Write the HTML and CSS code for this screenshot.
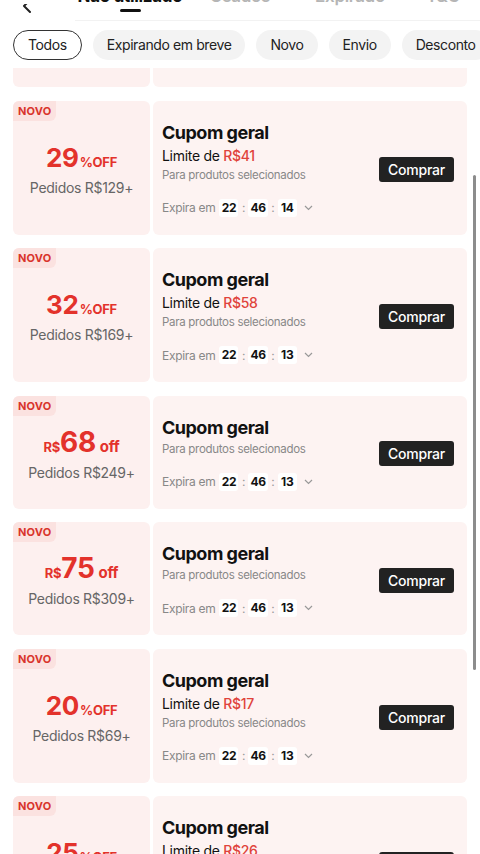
FILE: index.html
```html
<!DOCTYPE html>
<html lang="pt">
  <head>
    <meta charset="utf-8">
    <title>Meus cupons</title>
    <link rel="stylesheet" href="styles.css">
  </head>
  <body>
    <div class="page">
      <div class="header">
        <div class="tabs">
          <div class="back">
            <svg width="12" height="12" viewBox="0 0 12 12"><polyline points="9,-4 3,2 9,8" fill="none" stroke="#222" stroke-width="2" stroke-linecap="round" stroke-linejoin="round"/></svg>
          </div>
          <div class="tab-list">
            <div class="tab active"><span class="tab-label">Não utilizado</span><span class="tab-bar"></span></div>
            <div class="tab"><span class="tab-label">Usados</span></div>
            <div class="tab"><span class="tab-label">Expirado</span></div>
            <div class="tab tab-small"><span class="tab-label">T&amp;C</span></div>
          </div>
        </div>
        <div class="chips">
          <span class="chip chip-active">Todos</span>
          <span class="chip">Expirando em breve</span>
          <span class="chip">Novo</span>
          <span class="chip">Envio</span>
          <span class="chip">Desconto</span>
        </div>
      </div>

      <div class="list">
        <!-- previous coupon, mostly scrolled out -->
        <div class="coupon coupon-prev">
          <div class="coupon-left"></div>
          <div class="coupon-right"></div>
        </div>

        <div class="coupon">
          <div class="coupon-left">
            <span class="badge">NOVO</span>
            <div class="amount"><span class="num">29</span><span class="unit">%OFF</span></div>
            <div class="min">Pedidos R$129+</div>
          </div>
          <div class="coupon-right">
            <div class="info">
              <div class="title">Cupom geral</div>
              <div class="limit">Limite de <span class="red">R$41</span></div>
              <div class="scope">Para produtos selecionados</div>
              <div class="expiry">
                <span class="expiry-label">Expira em</span>
                <span class="time">22</span><span class="colon">:</span><span class="time">46</span><span class="colon">:</span><span class="time">14</span>
                <svg class="chev" width="9" height="6" viewBox="0 0 9 6"><polyline points="1,1 4.5,4.5 8,1" fill="none" stroke="#999" stroke-width="1.2"/></svg>
              </div>
            </div>
            <button class="buy">Comprar</button>
          </div>
        </div>

        <div class="coupon">
          <div class="coupon-left">
            <span class="badge">NOVO</span>
            <div class="amount"><span class="num">32</span><span class="unit">%OFF</span></div>
            <div class="min">Pedidos R$169+</div>
          </div>
          <div class="coupon-right">
            <div class="info">
              <div class="title">Cupom geral</div>
              <div class="limit">Limite de <span class="red">R$58</span></div>
              <div class="scope">Para produtos selecionados</div>
              <div class="expiry">
                <span class="expiry-label">Expira em</span>
                <span class="time">22</span><span class="colon">:</span><span class="time">46</span><span class="colon">:</span><span class="time">13</span>
                <svg class="chev" width="9" height="6" viewBox="0 0 9 6"><polyline points="1,1 4.5,4.5 8,1" fill="none" stroke="#999" stroke-width="1.2"/></svg>
              </div>
            </div>
            <button class="buy">Comprar</button>
          </div>
        </div>

        <div class="coupon">
          <div class="coupon-left">
            <span class="badge">NOVO</span>
            <div class="amount"><span class="cur">R$</span><span class="num">68</span><span class="unit unit-off">off</span></div>
            <div class="min">Pedidos R$249+</div>
          </div>
          <div class="coupon-right">
            <div class="info">
              <div class="title">Cupom geral</div>
              <div class="scope">Para produtos selecionados</div>
              <div class="expiry">
                <span class="expiry-label">Expira em</span>
                <span class="time">22</span><span class="colon">:</span><span class="time">46</span><span class="colon">:</span><span class="time">13</span>
                <svg class="chev" width="9" height="6" viewBox="0 0 9 6"><polyline points="1,1 4.5,4.5 8,1" fill="none" stroke="#999" stroke-width="1.2"/></svg>
              </div>
            </div>
            <button class="buy">Comprar</button>
          </div>
        </div>

        <div class="coupon">
          <div class="coupon-left">
            <span class="badge">NOVO</span>
            <div class="amount"><span class="cur">R$</span><span class="num">75</span><span class="unit unit-off">off</span></div>
            <div class="min">Pedidos R$309+</div>
          </div>
          <div class="coupon-right">
            <div class="info">
              <div class="title">Cupom geral</div>
              <div class="scope">Para produtos selecionados</div>
              <div class="expiry">
                <span class="expiry-label">Expira em</span>
                <span class="time">22</span><span class="colon">:</span><span class="time">46</span><span class="colon">:</span><span class="time">13</span>
                <svg class="chev" width="9" height="6" viewBox="0 0 9 6"><polyline points="1,1 4.5,4.5 8,1" fill="none" stroke="#999" stroke-width="1.2"/></svg>
              </div>
            </div>
            <button class="buy">Comprar</button>
          </div>
        </div>

        <div class="coupon">
          <div class="coupon-left">
            <span class="badge">NOVO</span>
            <div class="amount"><span class="num">20</span><span class="unit">%OFF</span></div>
            <div class="min">Pedidos R$69+</div>
          </div>
          <div class="coupon-right">
            <div class="info">
              <div class="title">Cupom geral</div>
              <div class="limit">Limite de <span class="red">R$17</span></div>
              <div class="scope">Para produtos selecionados</div>
              <div class="expiry">
                <span class="expiry-label">Expira em</span>
                <span class="time">22</span><span class="colon">:</span><span class="time">46</span><span class="colon">:</span><span class="time">13</span>
                <svg class="chev" width="9" height="6" viewBox="0 0 9 6"><polyline points="1,1 4.5,4.5 8,1" fill="none" stroke="#999" stroke-width="1.2"/></svg>
              </div>
            </div>
            <button class="buy">Comprar</button>
          </div>
        </div>

        <div class="coupon">
          <div class="coupon-left">
            <span class="badge">NOVO</span>
            <div class="amount"><span class="num">25</span><span class="unit">%OFF</span></div>
            <div class="min">Pedidos R$99+</div>
          </div>
          <div class="coupon-right">
            <div class="info">
              <div class="title">Cupom geral</div>
              <div class="limit">Limite de <span class="red">R$26</span></div>
              <div class="scope">Para produtos selecionados</div>
              <div class="expiry">
                <span class="expiry-label">Expira em</span>
                <span class="time">22</span><span class="colon">:</span><span class="time">46</span><span class="colon">:</span><span class="time">13</span>
              </div>
            </div>
            <button class="buy">Comprar</button>
          </div>
        </div>

        <div class="scrollbar"></div>
      </div>
    </div>
  </body>
</html>
```

FILE: styles.css
```css
*,
*:before,
*:after {
  box-sizing: border-box;
}

body {
  margin: 0;
  padding: 0;
  font-family: Inter, "Liberation Sans", sans-serif;
  letter-spacing: -0.3px;
  color: #111;
  background-color: #fff;
}

.page {
  width: 480px;
  height: 854px;
  overflow: hidden;
  display: flex;
  flex-direction: column;
}

/* header: tabs (scrolled partly off) + filter chips */
.header {
  height: 68px;
  flex: none;
  background-color: #fff;
}

.tabs {
  display: flex;
  height: 21px;
  overflow: hidden;
}

.back {
  width: 75px;
  padding-left: 21px;
  flex: none;
}

.tab-list {
  flex: 1;
  display: flex;
  border-bottom: 1px solid #f2f2f2;
}

.tab {
  width: 110px;
  display: flex;
  flex-direction: column;
  align-items: center;
}

.tab-small {
  width: 76px;
}

.tab-label {
  font-size: 17px;
  font-weight: 600;
  line-height: 22px;
  margin-top: -15px;
  color: #b5b5b5;
  white-space: nowrap;
}

.tab.active .tab-label {
  color: #111;
  font-weight: 700;
}

.tab-bar {
  width: 21px;
  height: 3px;
  margin-top: 2px;
  border-radius: 2px;
  background-color: #111;
}

.chips {
  display: flex;
  gap: 11px;
  padding: 9px 0 0 13px;
  white-space: nowrap;
  overflow: hidden;
}

.chip {
  flex: none;
  height: 30px;
  line-height: 30px;
  padding: 0 14px;
  border-radius: 15px;
  font-size: 14px;
  letter-spacing: -0.4px;
  color: #222;
  background-color: #f3f3f3;
}

.chip-active {
  background-color: #fff;
  border: 1.5px solid #333;
  line-height: 27px;
}

/* coupon list */
.list {
  position: relative;
  flex: 1;
  overflow: hidden;
  display: flex;
  flex-direction: column;
  gap: 13.5px;
  padding: 0 13px;
}

.coupon {
  display: flex;
  gap: 3px;
  flex: none;
}

.coupon-prev {
  height: 134px;
  margin-top: -115px;
}

.coupon-left {
  position: relative;
  width: 137px;
  flex: none;
  display: flex;
  flex-direction: column;
  align-items: center;
  justify-content: center;
  padding-top: 4px;
  border-radius: 6px;
  background-color: #fdf0ef;
}

.badge {
  position: absolute;
  top: 0;
  left: 0;
  padding: 3px 5px;
  font-size: 11px;
  font-weight: 700;
  line-height: 14px;
  letter-spacing: 0.2px;
  color: #d9342b;
  background-color: #fbe2e0;
  border-radius: 6px 0 6px 0;
}

.amount {
  display: flex;
  align-items: baseline;
  line-height: 30px;
  color: #e3322b;
  font-weight: 700;
}

.num {
  font-size: 26px;
}

.cur {
  font-size: 13px;
}

.coupon .cur + .num {
  font-size: 28px;
}

.unit {
  font-size: 13px;
  margin-left: 1px;
}

.unit-off {
  font-size: 15px;
  margin-left: 4px;
}

.min {
  margin-top: 2px;
  font-size: 14px;
  line-height: 18px;
  color: #666;
}

.coupon-right {
  flex: 1;
  display: flex;
  align-items: center;
  padding: 21px 13px 18px 9px;
  border-radius: 6px;
  background-color: #fdf3f2;
}

.info {
  flex: 1;
}

.title {
  font-size: 18px;
  font-weight: 700;
  line-height: 22px;
  letter-spacing: -0.5px;
}

.limit {
  margin-top: 3px;
  font-size: 14px;
  line-height: 18px;
  color: #111;
}

.red {
  color: #e0433b;
  font-weight: 500;
}

.scope {
  margin-top: 2px;
  font-size: 11.5px;
  line-height: 16px;
  color: #888;
}

.expiry {
  margin-top: 16px;
  display: flex;
  align-items: center;
  height: 18px;
  font-size: 12px;
  color: #888;
}

.expiry-label {
  margin-right: 4px;
}

.time {
  min-width: 19px;
  height: 18px;
  line-height: 18px;
  padding: 0 2px;
  text-align: center;
  font-weight: 700;
  color: #111;
  background-color: #fff;
  border-radius: 3px;
}

.colon {
  width: 10px;
  text-align: center;
  color: #999;
}

.chev {
  margin-left: 7px;
}

.buy {
  flex: none;
  margin-top: 0;
  width: 75px;
  height: 25px;
  padding: 0;
  border: none;
  border-radius: 3px;
  font-family: inherit;
  font-size: 14px;
  font-weight: 500;
  letter-spacing: -0.2px;
  color: #fff;
  background-color: #222;
}

.scrollbar {
  position: absolute;
  top: 107px;
  right: 4px;
  width: 3px;
  height: 495px;
  border-radius: 2px;
  background-color: #8c8c8c;
}
```
